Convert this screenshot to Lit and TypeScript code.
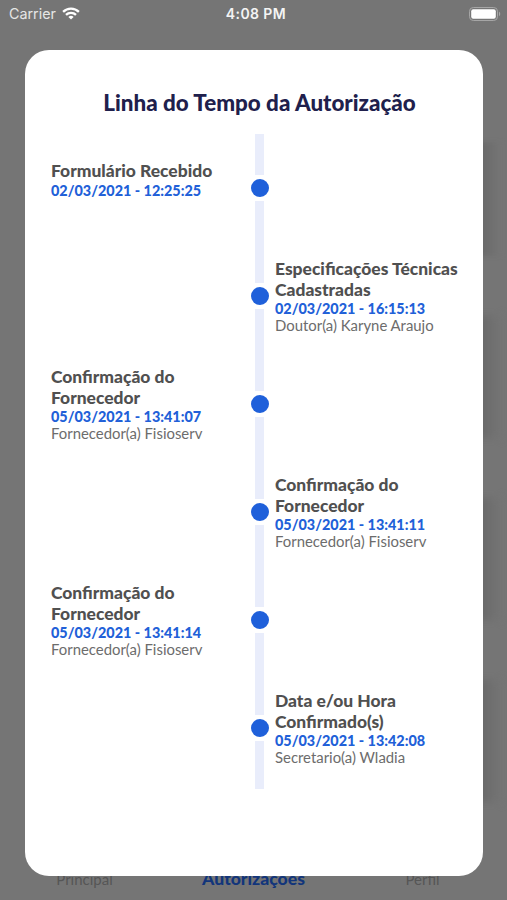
import { LitElement, html, css } from "lit";
import { customElement, property } from "lit/decorators.js";

interface TimelineEvent {
  title: string;
  date: string;
  author: string;
}

const EVENTS: TimelineEvent[] = [
  { title: "Formulário Recebido", date: "02/03/2021 - 12:25:25", author: "" },
  { title: "Especificações Técnicas Cadastradas", date: "02/03/2021 - 16:15:13", author: "Doutor(a) Karyne Araujo" },
  { title: "Confirmação do Fornecedor", date: "05/03/2021 - 13:41:07", author: "Fornecedor(a) Fisioserv" },
  { title: "Confirmação do Fornecedor", date: "05/03/2021 - 13:41:11", author: "Fornecedor(a) Fisioserv" },
  { title: "Confirmação do Fornecedor", date: "05/03/2021 - 13:41:14", author: "Fornecedor(a) Fisioserv" },
  { title: "Data e/ou Hora Confirmado(s)", date: "05/03/2021 - 13:42:08", author: "Secretario(a) Wladia" },
];

@customElement("status-bar")
export class StatusBar extends LitElement {
  static styles = css`
    :host {
      display: grid;
      grid-template-columns: 1fr auto 1fr;
      align-items: center;
      box-sizing: border-box;
      height: 27px;
      padding: 0 6px 0 9px;
      color: #f4f4f4;
      font-family: Inter, "Liberation Sans", sans-serif;
    }
    .carrier {
      display: flex;
      align-items: center;
      gap: 6px;
      font-size: 14.3px;
      color: #e6e6e6;
    }
    .time {
      font-weight: 600;
      font-size: 14px;
      letter-spacing: 0.4px;
      padding-left: 2px;
    }
    .battery {
      justify-self: end;
    }
    svg {
      display: block;
    }
  `;

  render() {
    return html`
      <div class="carrier">
        <span>Carrier</span>
        <svg width="18" height="13" viewBox="0 0 18 13" fill="none" stroke="#fff" stroke-width="2.3">
          <path d="M1.1 4.9a11.2 11.2 0 0 1 15.8 0" />
          <path d="M4 7.9a7 7 0 0 1 10 0" />
          <path d="M9 12.6 6.4 10a3.7 3.7 0 0 1 5.2 0z" fill="#fff" stroke="none" />
        </svg>
      </div>
      <div class="time">4:08 PM</div>
      <svg class="battery" width="32" height="14" viewBox="0 0 32 14">
        <rect x="0.5" y="0.5" width="28" height="13" rx="3.8" fill="none" stroke="#a6a6a6" />
        <rect x="2.2" y="2.2" width="24.6" height="9.6" rx="2" fill="#fff" />
        <path d="M30 4.8c1.6.6 1.6 3.8 0 4.4z" fill="#a6a6a6" />
      </svg>
    `;
  }
}

@customElement("timeline-row")
export class TimelineRow extends LitElement {
  @property({ attribute: false }) event!: TimelineEvent;
  @property({ type: Boolean, reflect: true }) right = false;

  static styles = css`
    :host {
      display: grid;
      grid-template-columns: 194px 20px 199px;
      column-gap: 5px;
      align-items: center;
      height: 108px;
      font-family: Lato, "Liberation Sans", sans-serif;
    }
    .text {
      grid-row: 1;
      grid-column: 1;
      padding-top: 1.6px;
    }
    :host([right]) .text {
      grid-column: 3;
    }
    .dot {
      grid-row: 1;
      grid-column: 2;
      justify-self: center;
      width: 18px;
      height: 18px;
      border: 4px solid #fff;
      background: #fff;
    }
    .dot::before {
      content: "";
      display: block;
      width: 18px;
      height: 18px;
      border-radius: 50%;
      background: #1f60da;
    }
    .title {
      max-width: 190px;
      font-size: 17.45px;
      line-height: 20.7px;
      font-weight: 900;
      color: #505050;
    }
    .date {
      font-size: 14.4px;
      line-height: 17.3px;
      font-weight: 900;
      color: #2160d8;
    }
    .author {
      min-height: 15.7px;
      margin-bottom: 1.6px;
      font-size: 14.9px;
      line-height: 15.7px;
      color: #6c6c6c;
    }
  `;

  render() {
    return html`
      <div class="text">
        <div class="title">${this.event.title}</div>
        <div class="date">${this.event.date}</div>
        <div class="author">${this.event.author}</div>
      </div>
      <div class="dot"></div>
    `;
  }
}

@customElement("app-root")
export class AppRoot extends LitElement {
  static styles = css`
    :host {
      display: block;
      position: relative;
      height: 900px;
      overflow: hidden;
      background: #757575;
      font-family: Lato, "Liberation Sans", sans-serif;
    }
    .backdrop {
      position: absolute;
      inset: 0;
      display: flex;
      flex-direction: column;
    }
    .cards {
      display: flex;
      flex-direction: column;
      gap: 60px;
      height: 834px;
      box-sizing: border-box;
      padding: 142px 6px 0 37px;
    }
    .card {
      height: 114px;
      flex: none;
      background: linear-gradient(to left, #757575, #696969 20px);
      filter: blur(2px);
    }
    .card + .card {
      height: 122px;
      filter: blur(4px);
    }
    .tabs {
      display: grid;
      grid-template-columns: repeat(3, 1fr);
      align-items: end;
      height: 66px;
      box-sizing: border-box;
      padding-bottom: 12px;
      text-align: center;
      font-size: 15px;
      line-height: 18px;
      color: #565656;
    }
    .active {
      font-size: 17.6px;
      font-weight: 900;
      color: #12357b;
    }
    .front {
      position: relative;
    }
    .sheet {
      box-sizing: border-box;
      width: 458px;
      height: 826px;
      margin: 23px 0 0 25px;
      padding: 40px 0 0 26px;
      border-radius: 24px;
      background: #fff;
    }
    .heading {
      margin: 0;
      padding-right: 15px;
      font-size: 22.4px;
      line-height: 26px;
      font-weight: 900;
      text-align: center;
      color: #20204c;
    }
    .timeline {
      width: 418px;
      height: 655px;
      margin-top: 18px;
      background: linear-gradient(#e9edfb, #e9edfb) 204px 0 / 9px 100% no-repeat;
    }
  `;

  render() {
    return html`
      <div class="backdrop">
        <div class="cards">
          <div class="card"></div>
          <div class="card"></div>
          <div class="card"></div>
          <div class="card"></div>
        </div>
        <div class="tabs">
          <span>Principal</span>
          <span class="active">Autorizações</span>
          <span>Perfil</span>
        </div>
      </div>
      <div class="front">
        <status-bar></status-bar>
        <section class="sheet">
          <h1 class="heading">Linha do Tempo da Autorização</h1>
          <div class="timeline">
            ${EVENTS.map(
              (event, i) => html`<timeline-row .event=${event} ?right=${i % 2 === 1}></timeline-row>`
            )}
          </div>
        </section>
      </div>
    `;
  }
}
